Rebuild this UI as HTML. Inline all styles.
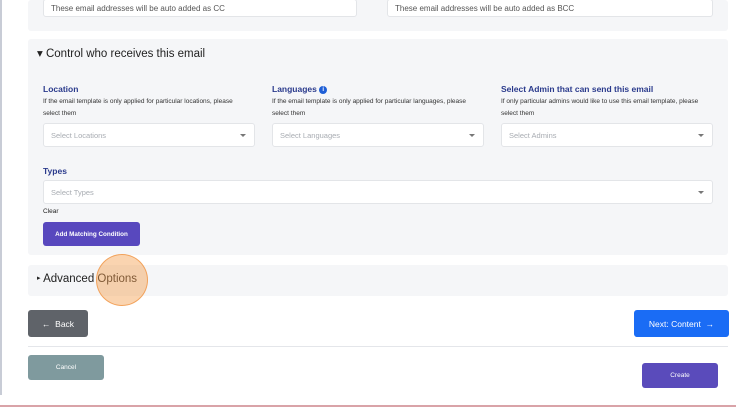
<!DOCTYPE html>
<html><head><style>
*{box-sizing:border-box;margin:0;padding:0}
body{width:736px;height:407px;background:#fff;font-family:"Liberation Sans",sans-serif;position:relative;overflow:hidden}
.a{position:absolute}
.sec{background:#f5f6f8;border-radius:3px}
.inp{background:#fff;border:1px solid #e3e5e8;border-radius:3px;font-size:8px;color:#555;padding-left:7px;display:flex;align-items:center}
.sel{color:#a8acb2;font-size:7.5px}
.sel:after{content:"";position:absolute;right:8px;top:50%;margin-top:-1px;border:3px solid transparent;border-top:3px solid #777;border-bottom:0}
.lbl{font-size:8.5px;color:#2a3a8c;font-weight:bold}
.desc{font-size:6.5px;color:#333;line-height:12px}
.btn{color:#fff;border-radius:3px;display:flex;align-items:center;justify-content:center;font-size:7.5px}
</style></head><body>
<div class="a" style="left:0;top:0;width:2px;height:395px;background:#c8ccd6"></div>
<div class="a sec" style="left:28px;top:0;width:700px;height:31px"></div>
<div class="a inp" style="left:43px;top:-1px;width:314px;height:18px">These email addresses will be auto added as CC</div>
<div class="a inp" style="left:387px;top:-1px;width:326px;height:18px">These email addresses will be auto added as BCC</div>

<div class="a sec" style="left:28px;top:39px;width:700px;height:216px"></div>
<div class="a" style="left:37px;top:46px;font-size:11.5px;color:#222">▾ Control who receives this email</div>

<div class="a lbl" style="left:43px;top:84px">Location</div>
<div class="a desc" style="left:43px;top:96px;width:205px">If the email template is only applied for particular locations, please select them</div>
<div class="a inp sel" style="left:43px;top:123px;width:212px;height:24px">Select Locations</div>

<div class="a lbl" style="left:272px;top:84px">Languages <span style="display:inline-block;width:8px;height:8px;border-radius:50%;background:#1f5fd6;color:#fff;font-size:6px;text-align:center;line-height:8px;vertical-align:1px">i</span></div>
<div class="a desc" style="left:272px;top:96px;width:210px">If the email template is only applied for particular languages, please select them</div>
<div class="a inp sel" style="left:272px;top:123px;width:212px;height:24px">Select Languages</div>

<div class="a lbl" style="left:501px;top:84px">Select Admin that can send this email</div>
<div class="a desc" style="left:501px;top:96px;width:212px">If only particular admins would like to use this email template, please select them</div>
<div class="a inp sel" style="left:501px;top:123px;width:212px;height:24px">Select Admins</div>

<div class="a lbl" style="left:43px;top:166px">Types</div>
<div class="a inp sel" style="left:43px;top:180px;width:670px;height:24px">Select Types</div>
<div class="a" style="left:43px;top:208px;font-size:6.5px;color:#222">Clear</div>
<div class="a btn" style="left:43px;top:222px;width:97px;height:24px;background:#5848be;font-size:6.3px;font-weight:bold">Add Matching Condition</div>

<div class="a sec" style="left:28px;top:265px;width:700px;height:31px"></div>
<div class="a" style="left:37px;top:273px;font-size:11.5px;color:#222"><span style="font-size:7px;vertical-align:2px">▸</span> Advanced Options</div>
<div class="a" style="left:96px;top:254px;width:52px;height:52px;border-radius:50%;background:rgba(245,160,80,.45);border:1.5px solid rgba(240,150,70,.8)"></div>

<div class="a btn" style="left:28px;top:310px;width:60px;height:27px;background:#5f6369;font-size:8.5px">← &nbsp;Back</div>
<div class="a btn" style="left:634px;top:310px;width:95px;height:27px;background:#1a6cf5;font-size:8.5px">Next: Content &nbsp;→</div>
<div class="a" style="left:28px;top:346px;width:700px;height:1px;background:#e4e6ea"></div>
<div class="a btn" style="left:28px;top:355px;width:76px;height:25px;background:#7f9a9e;font-size:6.5px">Cancel</div>
<div class="a btn" style="left:642px;top:363px;width:76px;height:25px;background:#5a4bbb;font-size:6.5px">Create</div>
<div class="a" style="left:0;top:405px;width:736px;height:2px;background:#d9a3a8"></div>
</body></html>
